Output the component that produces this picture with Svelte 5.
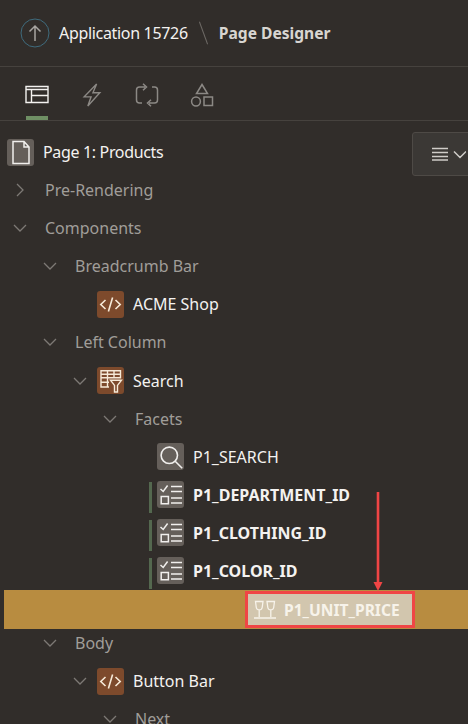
<script>
  const rows = [
    { id: 1, level: 1, toggle: 'right', label: 'Pre-Rendering', muted: true },
    { id: 2, level: 1, toggle: 'down', label: 'Components', muted: true },
    { id: 3, level: 2, toggle: 'down', label: 'Breadcrumb Bar', muted: true },
    { id: 4, level: 3, icon: 'code', label: 'ACME Shop' },
    { id: 5, level: 2, toggle: 'down', label: 'Left Column', muted: true },
    { id: 6, level: 3, toggle: 'down', icon: 'filter', label: 'Search' },
    { id: 7, level: 4, toggle: 'down', label: 'Facets', muted: true },
    { id: 8, level: 5, icon: 'search', label: 'P1_SEARCH' },
    { id: 9, level: 5, icon: 'check', label: 'P1_DEPARTMENT_ID', bold: true, marked: true },
    { id: 10, level: 5, icon: 'check', label: 'P1_CLOTHING_ID', bold: true, marked: true },
    { id: 11, level: 5, icon: 'check', label: 'P1_COLOR_ID', bold: true, marked: true },
    { id: 12, drop: true, label: 'P1_UNIT_PRICE' },
    { id: 13, level: 2, toggle: 'down', label: 'Body', muted: true, pull: true },
    { id: 14, level: 3, toggle: 'down', icon: 'code', label: 'Button Bar' },
    { id: 15, level: 4, toggle: 'down', label: 'Next', muted: true }
  ];
</script>

{#snippet nodeIcon(name)}
  {#if name === 'code'}
    <svg viewBox="0 0 27 27" fill="none" stroke="#f6ead8" stroke-width="1.6">
      <path d="M8.5 9 3.8 13.5 8.5 18M18.5 9l4.700 4.500-4.700 4.500M15.600 6.600l-4.200 13.800" />
    </svg>
  {:else if name === 'filter'}
    <svg viewBox="0 0 27 27" fill="none" stroke="#f6ead8" stroke-width="1.4">
      <path d="M4 3.700h19.500v7H4zM4 7.200h19.500M10.500 3.700v7M17 3.700v7M4 10.700V20h8M4 15.300h8M10.500 10.700V20" />
      <path d="M13.500 13.200h11l-4 5.200v6.600h-3v-6.600z" fill="#7d4a2c" />
    </svg>
  {:else if name === 'search'}
    <svg viewBox="0 0 27 27" fill="none" stroke="#f1efed" stroke-width="1.6">
      <circle cx="12.300" cy="12.300" r="8.200" />
      <path d="m18.200 18.200 7 7" />
    </svg>
  {:else if name === 'check'}
    <svg viewBox="0 0 27 27" fill="none" stroke="#f1efed" stroke-width="1.5">
      <path d="m3.500 8 2.700 2.500 4.400-6M14 5.500h11M14 10.500h11M14 17h11M14 22h11" />
      <path d="M4.200 15.500h7.200v7.200H4.200z" />
    </svg>
  {/if}
{/snippet}

<div class="designer">
  <header class="topbar">
    <button class="up" aria-label="Up">
      <svg viewBox="0 0 30 30" fill="none">
        <circle cx="15" cy="15" r="14" stroke="#3f6b7d" stroke-width="1" />
        <path d="M15 23V8M9.500 13.500 15 8l5.500 5.500" stroke="#a8a5a1" stroke-width="1.500" />
      </svg>
    </button>
    <span class="app">Application 15726</span>
    <span class="sep"></span>
    <span class="title">Page Designer</span>
  </header>

  <nav class="tabs">
    <div class="tab active">
      <svg viewBox="0 0 24 24" fill="none" stroke="#f4f2f0" stroke-width="1.400">
        <path d="M1 3.500h22v16H1zM1 6.500h22M6.500 6.500v13M6.500 12.500H23" />
      </svg>
    </div>
    <div class="tab">
      <svg viewBox="0 0 24 26" fill="none" stroke="#8c8985" stroke-width="1.500">
        <path d="M17 1 3.500 15H11L7.500 25 20.500 10.500H13z" />
      </svg>
    </div>
    <div class="tab">
      <svg viewBox="0 0 24 24" fill="none" stroke="#8c8985" stroke-width="1.500">
        <path d="M10 4H4.500Q1.500 4 1.500 7v10q0 3 3 3H7M14 20h5.500q3 0 3-3V7q0-3-3-3H17M8 .8 11.500 4 8 7.200M16 16.800 12.500 20l3.500 3.200" />
      </svg>
    </div>
    <div class="tab">
      <svg viewBox="0 0 24 24" fill="none" stroke="#8c8985" stroke-width="1.500">
        <path d="M12 1.500 17.500 10.500H6.500zM14 14h8.500v8.500H14z" />
        <circle cx="6" cy="18.500" r="4.400" />
      </svg>
    </div>
  </nav>

  <section class="tree">
    <button class="menu" aria-label="Menu">
      <svg viewBox="0 0 34 14" fill="none" stroke="#cfccc8" stroke-width="1.500">
        <path d="M1 1.500h16M1 5.500h16M1 9.500h16M1 13h16M23 4.500l6 6 6-6" />
      </svg>
    </button>

    <div class="root">
      <span class="icon page">
        <svg viewBox="0 0 27 27" fill="none" stroke="#f1efed" stroke-width="1.500">
          <path d="M6 2.500h11l5 5.500v16.500H6zM17 2.500V8h5" />
        </svg>
      </span>
      <span class="root-label">Page 1: Products</span>
    </div>

    {#each rows as row (row.id)}
      {#if row.drop}
        <div class="drop">
          <div class="drop-item">
            <svg viewBox="0 0 24 20" fill="none" stroke="#f7f3ea" stroke-width="1.300">
              <path d="M2.500 1.500h7.500l-.8 6a3 3 0 0 1-5.900 0zM14 1.500h7.500l-.8 6a3 3 0 0 1-5.900 0zM6.200 10.500v6.500M17.800 10.500v6.500M1 18h22" />
            </svg>
            <span>{row.label}</span>
          </div>
        </div>
      {:else}
        <div class="row" class:pull={row.pull} style="padding-left: {(row.level - 1) * 30 + 10}px">
          <span class="toggle" class:marked={row.marked}>
            {#if row.toggle}
              <svg class={row.toggle} viewBox="0 0 14 8" fill="none" stroke="#7d7975" stroke-width="1.300">
                <path d="m1 1 6 6 6-6" />
              </svg>
            {/if}
          </span>
          {#if row.icon}
            <span class="icon" class:brown={row.icon === 'code' || row.icon === 'filter'}>
              {@render nodeIcon(row.icon)}
            </span>
          {/if}
          <span class="label" class:muted={row.muted} class:bold={row.bold} class:plain={!row.icon}>{row.label}</span>
        </div>
      {/if}
    {/each}

    <svg class="arrow" viewBox="0 0 12 100" fill="none">
      <path d="M6 0v90" stroke="#f04545" stroke-width="2.600" />
      <path d="M1.500 90h9L6 99z" fill="#f04545" />
    </svg>
  </section>
</div>

<style>
  :global(body) {
    background: #312d2a;
  }

  .designer {
    width: 468px;
    height: 724px;
    overflow: hidden;
    background: #312d2a;
    color: #f4f2f0;
    font-family: "Noto Sans", "Open Sans", sans-serif;
    font-size: 16px;
  }

  .topbar {
    display: flex;
    align-items: center;
    height: 67px;
    padding-left: 20px;
    box-sizing: border-box;
    border-bottom: 1px solid #46423e;
  }

  .up {
    width: 30px;
    height: 30px;
    padding: 0;
    border: 0;
    background: none;
  }

  .up svg {
    display: block;
  }

  .app {
    margin-left: 9px;
    letter-spacing: -0.32px;
  }

  .sep {
    width: 1px;
    height: 24px;
    margin: 0 15px 0 15px;
    background: #6d6965;
    transform: rotate(-20deg);
  }

  .title {
    font-weight: 700;
    font-size: 15.6px;
    color: #d8d5d1;
  }

  .tabs {
    display: flex;
    gap: 33px;
    height: 54px;
    padding-left: 26px;
    box-sizing: border-box;
    border-bottom: 1px solid #46423e;
  }

  .tab {
    width: 22px;
    height: 53px;
    display: flex;
    justify-content: center;
    padding-top: 16px;
    box-sizing: border-box;
  }

  .tab svg {
    width: 24px;
    height: 24px;
    flex: none;
  }

  .tab.active {
    border-bottom: 4px solid #6f8f64;
  }

  .tree {
    position: relative;
    padding-top: 12px;
  }

  .menu {
    position: absolute;
    top: 11px;
    left: 412px;
    width: 70px;
    height: 44px;
    border: 1px solid #4e4a46;
    border-radius: 3px;
    background: #3b3835;
    padding: 0 0 0 17px;
    display: flex;
    align-items: center;
  }

  .menu svg {
    width: 36px;
    height: 14px;
    flex: none;
  }

  .root {
    display: flex;
    align-items: center;
    height: 38px;
    padding-left: 7px;
  }

  .root-label {
    margin-left: 9px;
    letter-spacing: -0.34px;
  }

  .icon {
    width: 27px;
    height: 27px;
    flex: none;
    border-radius: 3px;
    background: #655f5a;
  }

  .icon.brown {
    background: #7d4a2c;
  }

  .icon svg {
    display: block;
    width: 27px;
    height: 27px;
  }

  .row {
    display: flex;
    align-items: center;
    height: 38.1px;
  }

  .row.pull {
    margin-top: -5px;
  }

  .toggle {
    position: relative;
    width: 20px;
    display: flex;
    justify-content: center;
    margin-right: 7px;
    flex: none;
  }

  .toggle svg {
    width: 14px;
    height: 8px;
  }

  .toggle svg.right {
    transform: rotate(-90deg);
  }

  .toggle.marked::after {
    content: "";
    position: absolute;
    right: -2px;
    top: -13px;
    width: 3px;
    height: 31px;
    background: #54684f;
  }

  .label {
    margin-left: 9px;
    white-space: nowrap;
  }

  .label.plain {
    margin-left: 8px;
  }

  .label.muted {
    color: #a09d99;
  }

  .label.bold {
    font-weight: 700;
  }

  .drop {
    height: 39px;
    margin-left: 4px;
    padding-left: 241px;
    box-sizing: border-box;
    background: #b88c40;
    display: flex;
    align-items: center;
  }

  .drop-item {
    width: 170px;
    height: 37px;
    box-sizing: border-box;
    border: 3px solid #f04545;
    background: #d2c6ae;
    display: flex;
    align-items: center;
    padding-left: 5px;
    color: #f7f3ea;
    font-weight: 700;
    font-size: 15.6px;
  }

  .drop-item svg {
    width: 24px;
    height: 20px;
    flex: none;
    margin-right: 7px;
  }

  .arrow {
    position: absolute;
    left: 372px;
    top: 371px;
    width: 12px;
    height: 100px;
  }
</style>
